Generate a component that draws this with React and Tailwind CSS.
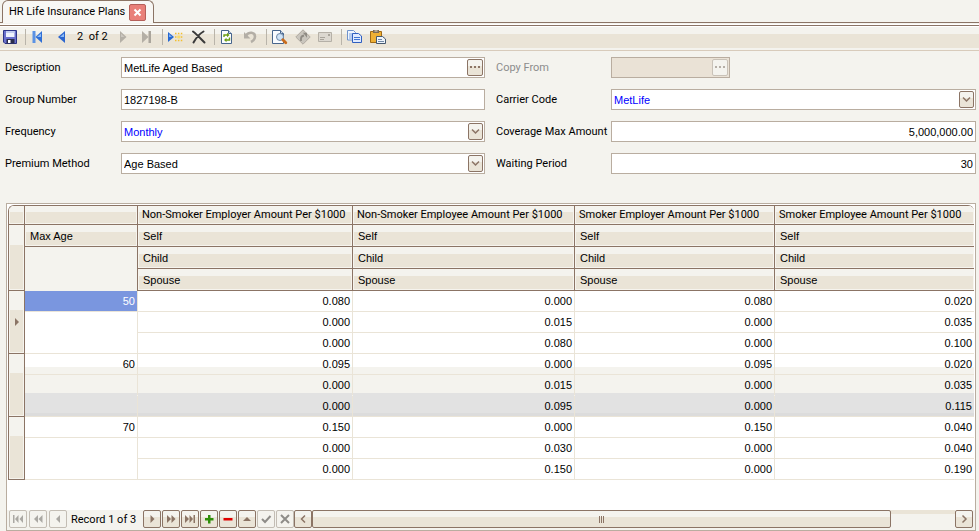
import React from "react";

const records = [
  {
    age: "50",
    selected: true,
    rows: [
      ["0.080", "0.000", "0.080", "0.020"],
      ["0.000", "0.015", "0.000", "0.035"],
      ["0.000", "0.080", "0.000", "0.100"],
    ],
  },
  {
    age: "60",
    shaded: true,
    rows: [
      ["0.095", "0.000", "0.095", "0.020"],
      ["0.000", "0.015", "0.000", "0.035"],
      ["0.000", "0.095", "0.000", "0.115"],
    ],
  },
  {
    age: "70",
    rows: [
      ["0.150", "0.000", "0.150", "0.040"],
      ["0.000", "0.030", "0.000", "0.040"],
      ["0.000", "0.150", "0.000", "0.190"],
    ],
  },
];

const groups = [
  "Non-Smoker Employer Amount Per $1000",
  "Non-Smoker Employee Amount Per $1000",
  "Smoker Employer Amount Per $1000",
  "Smoker Employee Amount Per $1000",
];

const tahoma = "font-['Roboto',sans-serif]";
const bevel =
  "bg-[linear-gradient(#f4f3ee_35%,#eae4d7_35%)] shadow-[inset_0_0_0_1px_#f6f4ee]";
const headLine = "border-b border-[#8b7465]";

function Icon({ children }) {
  return (
    <svg viewBox="0 0 16 16" className="block size-4" aria-hidden="true">
      {children}
    </svg>
  );
}

function Tool({ label, disabled, children }) {
  return (
    <button type="button" aria-label={label} title={label} disabled={disabled} className="size-4">
      <Icon>{children}</Icon>
    </button>
  );
}

function ToolGroup({ last, children }) {
  return (
    <div
      className={
        last
          ? "flex items-center gap-[7px]"
          : "mr-[5px] flex items-center gap-[7px] border-r border-[#b9b4aa] pr-[7px]"
      }
    >
      {children}
    </div>
  );
}

function Toolbar() {
  return (
    <div
      role="toolbar"
      aria-label="Record tools"
      className="flex h-[25px] items-center border-b border-[#d8cbbb] bg-[linear-gradient(#fff_1px,#f4f3ee_1px,#f4f3ee_8px,#eae4d7_8px,#eae4d7_22px,#f4f3ee_22px)] pb-0.5 pl-0.5"
    >
      <ToolGroup>
        <Tool label="Save">
          <path d="M1.500 1.500h13v13H3L1.500 13z" fill="#6a70cc" stroke="#2c3486" />
          <path d="M4 2h8.500v6H4z" fill="#eef2fc" />
          <path d="M4 2h8.500v2H4z" fill="#c3cdf0" />
          <path d="M4.500 10h8v4.500h-8z" fill="#2a2d4c" />
          <path d="M6 11h2.500v3H6z" fill="#fff" />
        </Tool>
      </ToolGroup>
      <ToolGroup>
        <Tool label="First record">
          <path d="M1.500 2h3v12h-3z" fill="#5b92e4" />
          <path d="M11 2v12L4.500 8z" fill="#2f6fd6" />
          <path d="M10 4.500V8H6z" fill="#8fbcf5" />
        </Tool>
        <Tool label="Previous record">
          <path d="M11 2v12L4 8z" fill="#2c66cf" />
          <path d="M10 4.500V8H6z" fill="#8fbcf5" />
        </Tool>
        <span className={`w-8 whitespace-nowrap text-[11px] leading-4 ${tahoma}`}>2&nbsp; of 2</span>
        <Tool label="Next record" disabled>
          <path d="M4 2v12l6.500-6z" fill="#b4afa6" />
          <path d="M5 4.500V8h3.500z" fill="#cbc7bf" />
        </Tool>
        <Tool label="Last record" disabled>
          <path d="M3 2v12l6.500-6z" fill="#b4afa6" />
          <path d="M9.500 2H12v12H9.500z" fill="#aaa59c" />
        </Tool>
      </ToolGroup>
      <ToolGroup>
        <Tool label="New record">
          <path d="M0 3v10l6-5z" fill="#2568d2" />
          <path d="M1 5v3h3z" fill="#7fb0f3" />
          <path d="M7 4.500h7.500M7 8h7.500M7 11.500h7.500" stroke="#f3bf2e" strokeWidth="1.500" strokeDasharray="1.500 1.400" />
          <path d="M9.300 6.500h3v3h-3z" fill="#f8dc6a" />
        </Tool>
        <Tool label="Delete">
          <path d="M2 2.500c4 3 7.500 7 11.500 11M12.500 2.500C8 5 5 9 2.500 13.500" fill="none" stroke="#3a3a3a" strokeWidth="2" strokeLinecap="round" />
        </Tool>
      </ToolGroup>
      <ToolGroup>
        <Tool label="Refresh">
          <path d="M1.500 1.500h7l3 3v10h-10z" fill="#fbfdff" stroke="#47658c" />
          <path d="M8.500 1.500v3h3" fill="#c8d6e8" stroke="#47658c" />
          <path d="M4 8V6h4M9.500 8.500v2.500H5" fill="none" stroke="#6d9d12" strokeWidth="1.400" />
          <path d="M7 3.800L9.500 6 7 8.200zM6.500 8.800L4 11l2.500 2.200z" fill="#6d9d12" />
        </Tool>
        <Tool label="Undo" disabled>
          <path d="M3 6.500C6 2.500 12 3 12 7.500c0 3-2 4.500-4 5.500" fill="none" stroke="#b3aea6" strokeWidth="2.600" />
          <path d="M1 3v6.500h6.500z" fill="#b3aea6" />
        </Tool>
      </ToolGroup>
      <ToolGroup>
        <Tool label="Print preview">
          <path d="M.5 1.500h8l3 3v10H.5z" fill="#f8fbff" stroke="#47658c" />
          <path d="M8.500 1.500v3h3" fill="#c8d6e8" stroke="#47658c" />
          <circle cx="8" cy="8" r="3.500" fill="#cfe3f7" stroke="#6d87a5" />
          <path d="M10.800 10.800l3 3" stroke="#c96c1c" strokeWidth="2.800" strokeLinecap="round" />
        </Tool>
        <Tool label="Go to" disabled>
          <path d="M8 .8L15.200 8 8 15.200.8 8z" fill="#c9c5bd" stroke="#b0aba2" />
          <path d="M6 12V9.500Q6 7 9 6.500" fill="none" stroke="#8f8b84" strokeWidth="1.800" />
          <path d="M8 3.800h4v5z" fill="#8f8b84" />
        </Tool>
        <Tool label="Send mail" disabled>
          <path d="M.5 3.500h13v9H.5z" fill="#dcd8d0" stroke="#b5b0a7" />
          <path d="M2 8.500h5M2 10.500h4" stroke="#a9a49b" />
          <path d="M10 5h2v2h-2z" fill="#a9a49b" />
        </Tool>
      </ToolGroup>
      <ToolGroup last>
        <Tool label="Copy">
          <path d="M.5 1.500h6l2 2v7.500h-8z" fill="#eef5ff" stroke="#7093cc" />
          <path d="M2 5h4M2 7h4M2 9h4" stroke="#7ba0dd" />
          <path d="M5.500 4.500h6l3 2.500v6.500h-9z" fill="#dfeaff" stroke="#2f5fc0" />
          <path d="M7 8.500h6M7 10.500h6" stroke="#3f74d4" />
        </Tool>
        <Tool label="Paste">
          <path d="M.5 2.500h11v11H.5z" fill="#eeb035" stroke="#a06a16" />
          <path d="M3 1h6v3H3z" fill="#7c6b55" />
          <path d="M4.500 1.500h3v1h-3z" fill="#e8e2d0" />
          <path d="M6.500 7.500h6l3 2.500v4.500h-9z" fill="#eef4fb" stroke="#44586f" />
          <path d="M8 10.500h4M8 12.500h6" stroke="#7088a4" />
        </Tool>
      </ToolGroup>
    </div>
  );
}

function FieldLabel({ id, disabled, children }) {
  return (
    <label
      htmlFor={id}
      className={`text-[11px] leading-[21px] whitespace-nowrap ${tahoma} ${disabled ? "text-[#8c8c8c]" : "text-black"}`}
    >
      {children}
    </label>
  );
}

function TextField({ id, value, right }) {
  return (
    <input
      id={id}
      defaultValue={value}
      className={`h-[21px] w-full min-w-0 border border-[#b9ada0] bg-white px-0.5 text-[11px] outline-none ${right ? "text-right" : ""}`}
    />
  );
}

function LookupField({ id, value, disabled }) {
  return (
    <div
      className={`flex h-[21px] items-center border border-[#b9ada0] pr-px ${disabled ? "w-[119px] bg-[#eae2d6]" : "w-full bg-white"}`}
    >
      <input
        id={id}
        defaultValue={value}
        disabled={disabled}
        className="h-full min-w-0 flex-1 bg-transparent px-0.5 text-[11px] outline-none"
      />
      <button
        type="button"
        aria-label="Look up"
        disabled={disabled}
        className={`flex h-[17px] w-4 items-center justify-center gap-0.5 rounded-xs border pb-0.5 ${disabled ? "border-[#c9c2b8] bg-[#f4f3ee] text-[#b5aea6]" : "border-[#8b7465] bg-[linear-gradient(#f4f3ee_40%,#eae4d7_40%)] text-[#8b7465]"}`}
      >
        <span className="size-0.5 bg-current" />
        <span className="size-0.5 bg-current" />
        <span className="size-0.5 bg-current" />
      </button>
    </div>
  );
}

function SelectField({ id, value }) {
  return (
    <div className="relative flex h-[21px] w-full border border-[#b9ada0] bg-white">
      <select
        id={id}
        defaultValue={value}
        className={`h-full w-full appearance-none bg-transparent px-0.5 pt-px text-[11px] outline-none ${value === "Age Based" ? "text-black" : "text-[#0000ff]"}`}
      >
        <option>{value}</option>
      </select>
      <span className="pointer-events-none absolute top-px right-px flex h-[17px] w-[15px] items-center justify-center rounded-xs border border-[#8b7465] bg-[linear-gradient(#f4f3ee_40%,#eae4d7_40%)]">
        <svg viewBox="0 0 9 7" className="h-[7px] w-[9px]" aria-hidden="true">
          <path d="M1 1.500l3.500 3.500L8 1.500" fill="none" stroke="#8b7465" strokeWidth="1.500" />
        </svg>
      </span>
    </div>
  );
}

function PlanForm() {
  return (
    <form className="flex gap-[11px] pt-1.5 pr-[3px] pl-[5px]">
      <div className="grid flex-1 grid-cols-[116px_1fr] content-start gap-y-[11px]">
        <FieldLabel id="description">Description</FieldLabel>
        <LookupField id="description" value="MetLife Aged Based" />
        <FieldLabel id="group">Group Number</FieldLabel>
        <TextField id="group" value="1827198-B" />
        <FieldLabel id="frequency">Frequency</FieldLabel>
        <SelectField id="frequency" value="Monthly" />
        <FieldLabel id="premium">Premium Method</FieldLabel>
        <SelectField id="premium" value="Age Based" />
      </div>
      <div className="grid flex-1 grid-cols-[115px_1fr] content-start gap-y-[11px]">
        <FieldLabel id="copy" disabled>Copy From</FieldLabel>
        <LookupField id="copy" value="" disabled />
        <FieldLabel id="carrier">Carrier Code</FieldLabel>
        <SelectField id="carrier" value="MetLife" />
        <FieldLabel id="coverage">Coverage Max Amount</FieldLabel>
        <TextField id="coverage" value="5,000,000.00" right />
        <FieldLabel id="waiting">Waiting Period</FieldLabel>
        <TextField id="waiting" value="30" right />
      </div>
    </form>
  );
}

const shade = [
  "bg-[linear-gradient(#fff_13px,#f4f3ee_13px)]",
  "bg-[linear-gradient(#f4f3ee_18px,#e2e2e2_18px)] bg-origin-border",
  "bg-[linear-gradient(#e2e2e2_17px,#dcdcdc_17px)]",
];

function RecordRows({ record }) {
  const indicator =
    "border-r border-b border-[#8b7465] bg-[linear-gradient(#f4f3ee_30%,#eae4d7_30%)] p-0 shadow-[inset_0_0_0_1px_#f6f4ee]";
  return record.rows.map((row, i) => (
    <tr key={i} className="h-[21px]">
      {i === 0 && (
        <td rowSpan={3} className={indicator}>
          {record.selected && (
            <svg viewBox="0 0 4 8" className="mx-auto h-2 w-1" aria-label="Current record">
              <path d="M0 0l4 4-4 4z" fill="#8b7465" />
            </svg>
          )}
        </td>
      )}
      {i === 0 && (
        <td
          className={`border-r border-b border-[#eae4d7] p-0 pr-0.5 text-right ${record.selected ? "bg-[#7a96df] bg-clip-padding text-white" : ""} ${record.shaded ? shade[0] : ""}`}
        >
          {record.age}
        </td>
      )}
      {i === 1 && !record.shaded && <td rowSpan={2} className="border-r border-b border-[#eae4d7] p-0" />}
      {i > 0 && record.shaded && (
        <td
          className={`border-r border-b border-r-[#eae4d7] p-0 ${i === 2 ? "border-b-[#eae4d7]" : "border-b-transparent"} ${shade[i]}`}
        />
      )}
      {row.map((value, c) => (
        <td
          key={c}
          className={`border-b border-r-[#eae4d7] p-0 pr-0.5 text-right ${c < 3 ? "border-r" : ""} ${record.shaded && i === 1 ? "border-b-transparent" : "border-b-[#eae4d7]"} ${record.shaded ? shade[i] : ""}`}
        >
          {value}
        </td>
      ))}
    </tr>
  ));
}

function RateTable() {
  return (
    <div className="overflow-hidden rounded-t-md border-t border-l border-[#8b7465]">
      <table className="w-full table-fixed border-separate border-spacing-0 text-[11px] leading-4">
        <colgroup>
          <col className="w-4" />
          <col className="w-[113px]" />
          <col className="w-[215px]" />
          <col className="w-[222px]" />
          <col className="w-[200px]" />
          <col />
        </colgroup>
        <thead className="text-left">
          <tr className="h-[19px]">
            <td className={`border-r p-0 ${headLine} ${bevel}`} />
            <td className={`border-r p-0 ${headLine} ${bevel}`} />
            {groups.map((g, i) => (
              <th
                key={g}
                scope="colgroup"
                className={`p-0 pl-1 font-normal whitespace-nowrap ${tahoma} ${headLine} ${bevel} ${i < 3 ? "border-r" : ""}`}
              >
                {g}
              </th>
            ))}
          </tr>
          {["Self", "Child", "Spouse"].map((name, r) => (
            <tr key={name} className="h-[22px]">
              {r === 0 && (
                <>
                  <td
                    rowSpan={3}
                    className={`border-r bg-[linear-gradient(#f4f3ee_30%,#eae4d7_30%)] p-0 shadow-[inset_0_0_0_1px_#f6f4ee] ${headLine}`}
                  />
                  <th scope="col" className={`border-r p-0 pl-[5px] font-normal ${headLine} ${bevel}`}>
                    Max Age
                  </th>
                </>
              )}
              {r === 1 && <td rowSpan={2} className="border-r border-[#8b7465] bg-[#f4f3ee] p-0" />}
              {groups.map((g, i) => (
                <th
                  key={g}
                  scope="col"
                  className={`p-0 pl-[5px] font-normal ${headLine} ${bevel} ${i < 3 ? "border-r" : ""}`}
                >
                  {name}
                </th>
              ))}
            </tr>
          ))}
        </thead>
        <tbody>
          {records.map((r) => (
            <RecordRows key={r.age} record={r} />
          ))}
        </tbody>
      </table>
    </div>
  );
}

function NavButton({ label, disabled, children }) {
  return (
    <button
      type="button"
      aria-label={label}
      disabled={disabled}
      className={`flex h-[18px] w-[18px] shrink-0 items-center justify-center rounded-xs border ${disabled ? "border-[#c3bdb4] bg-[#f4f3ee] text-[#aaa8a3]" : "border-[#8b7465] bg-[linear-gradient(#f4f3ee_40%,#eae4d7_40%)] text-[#8b7465]"}`}
    >
      <svg viewBox="0 0 12 12" className="size-3" fill="currentColor" aria-hidden="true">
        {children}
      </svg>
    </button>
  );
}

function Navigator() {
  return (
    <div className="flex h-5 items-start bg-[#f4f3ee] px-0.5">
      <div className="flex gap-0.5">
        <NavButton label="First" disabled>
          <path d="M1 2h1.500v8H1zM6.500 2v8L3 6zM11 2v8L7.500 6z" />
        </NavButton>
        <NavButton label="Previous page" disabled>
          <path d="M6 2v8L2 6zM10.500 2v8L6.500 6z" />
        </NavButton>
        <NavButton label="Previous" disabled>
          <path d="M8 2v8L4 6z" />
        </NavButton>
      </div>
      <span className={`w-[76px] pl-1 text-[11px] leading-5 whitespace-nowrap ${tahoma}`}>
        Record 1 of 3
      </span>
      <div className="flex gap-px">
        <NavButton label="Next">
          <path d="M4.500 2v8l4-4z" />
        </NavButton>
        <NavButton label="Next page">
          <path d="M2 2v8l4-4zM6.500 2v8l4-4z" />
        </NavButton>
        <NavButton label="Last">
          <path d="M1 2v8l4-4zM5.500 2v8L9 6zM9.500 2H11v8H9.500z" />
        </NavButton>
        <NavButton label="Add">
          <path d="M5 2h2.500v3H10.500v2.500h-3v3H5v-3H2V5h3z" fill="#2f8f0b" />
        </NavButton>
        <NavButton label="Remove">
          <path d="M1.500 5h9v2.500h-9z" fill="#e00000" />
        </NavButton>
        <NavButton label="Edit">
          <path d="M2 8h8L6 4z" />
        </NavButton>
        <NavButton label="Post" disabled>
          <path d="M2 6l3 3 5.500-6" fill="none" stroke="#8e8c88" strokeWidth="2" />
        </NavButton>
        <NavButton label="Cancel" disabled>
          <path d="M2 2l8 8M10 2l-8 8" fill="none" stroke="#8e8c88" strokeWidth="2" />
        </NavButton>
      </div>
      <NavButton label="Scroll left">
        <path d="M8 2.500L4.500 6 8 9.500" fill="none" stroke="currentColor" strokeWidth="1.500" />
      </NavButton>
      <div className="flex h-[18px] flex-1 bg-[linear-gradient(#eae4d7_4px,#f4f3ee_4px)]">
        <div className="flex h-[18px] w-[90%] items-center justify-center gap-px rounded-xs border border-[#8b7465] bg-[linear-gradient(#f4f3ee_35%,#eae4d7_35%)]">
          <span className="h-[7px] w-px bg-[#8b7465]" />
          <span className="h-[7px] w-px bg-[#8b7465]" />
          <span className="h-[7px] w-px bg-[#8b7465]" />
        </div>
      </div>
      <NavButton label="Scroll right">
        <path d="M4.500 2.500L8 6 4.500 9.500" fill="none" stroke="currentColor" strokeWidth="1.500" />
      </NavButton>
    </div>
  );
}

export default function App() {
  return (
    <main className="flex min-h-screen flex-col bg-[#f4f3ee] font-['Liberation_Sans',Arial,sans-serif] text-black">
      <div className="flex h-[26px] flex-col">
        <div role="tablist" className="flex h-[23px] items-stretch">
          <span className="w-0.5 border-b border-[#8b7465]" />
          <div
            role="tab"
            aria-selected="true"
            className="flex w-[152px] items-center justify-between rounded-t-md border-x border-t border-[#8b7465] bg-[#f8f7f4] pr-[7px] pl-1.5"
          >
            <span className={`text-[11px] whitespace-nowrap ${tahoma}`}>HR Life Insurance Plans</span>
            <button
              type="button"
              aria-label="Close tab"
              className="flex size-[17px] items-center justify-center rounded-xs border border-[#b5605a] bg-[#e98079]"
            >
              <svg viewBox="0 0 9 9" className="size-[9px]" aria-hidden="true">
                <path d="M1.500 1.500l6 6M7.500 1.500l-6 6" stroke="#fff" strokeWidth="2" />
              </svg>
            </button>
          </div>
          <span className="flex-1 border-b border-[#8b7465]" />
        </div>
        <div className="h-[3px] border-b border-[#8b7465] bg-[linear-gradient(#f4f3ee_1px,#fff_1px)]" />
      </div>
      <Toolbar />
      <PlanForm />
      <section
        aria-label="Plan rates"
        className="mt-[29px] mr-[3px] ml-1.5 flex flex-1 flex-col border border-[#b9ada0] bg-white"
      >
        <div className="flex-1 px-px pt-px">
          <RateTable />
        </div>
        <Navigator />
      </section>
    </main>
  );
}
